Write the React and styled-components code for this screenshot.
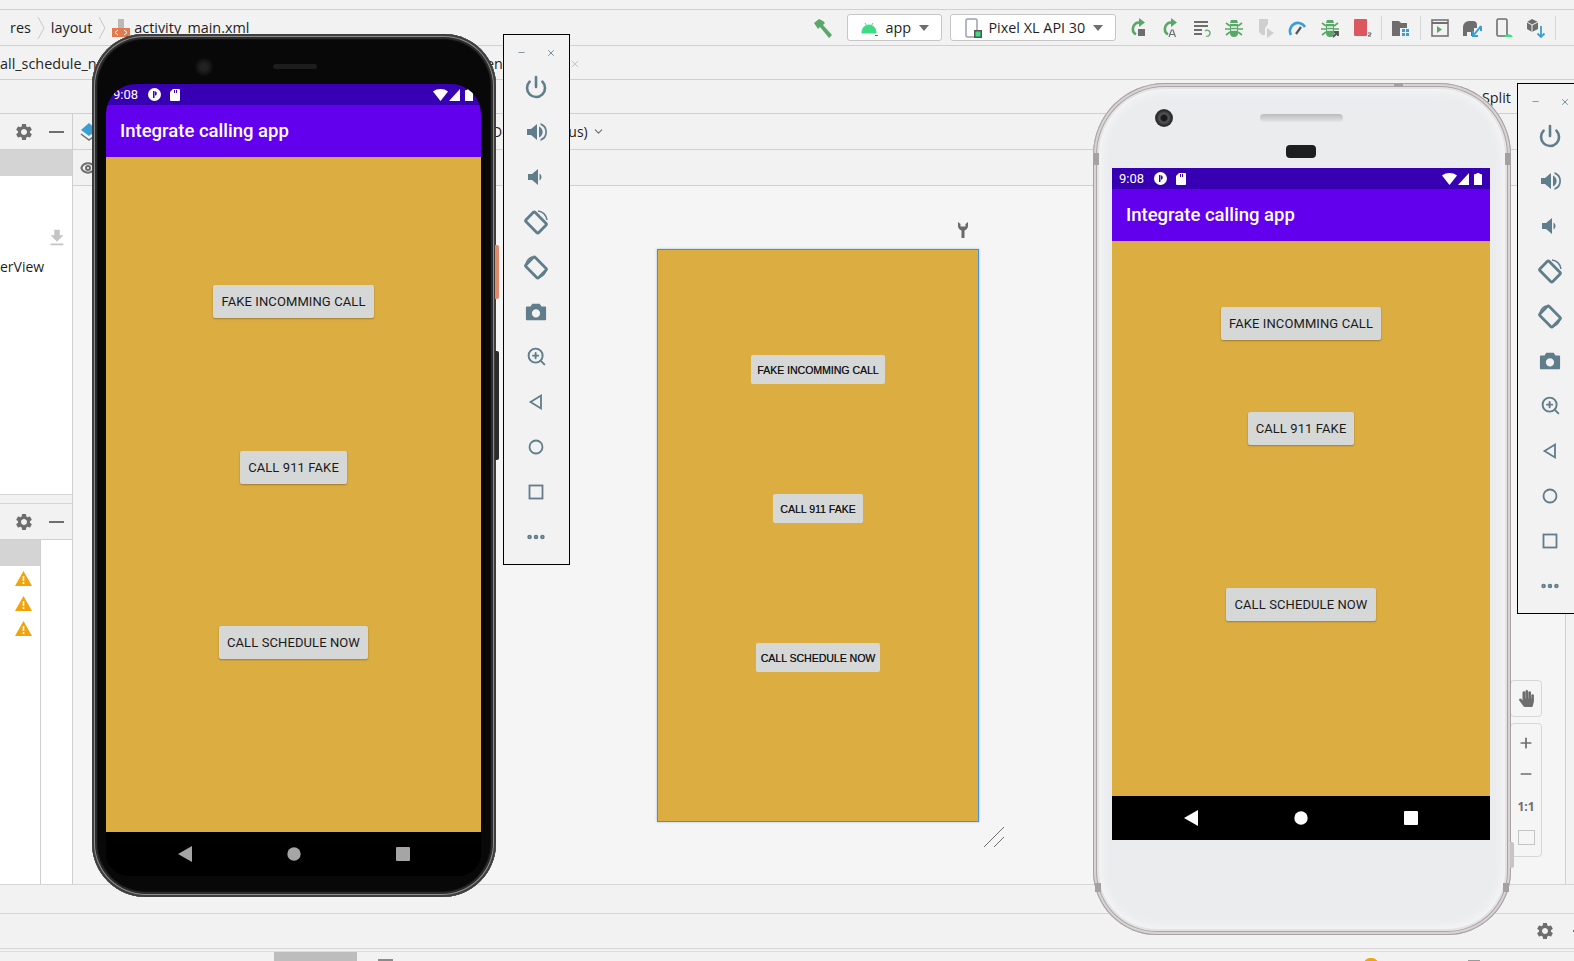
import React from "react"
import styled, { createGlobalStyle } from "styled-components"
import { Power, ZoomIn, Plus, Minus, X, ChevronDown, Eye, MoreHorizontal } from "lucide-react"
import { MdSettings, MdFileDownload } from "react-icons/md"
import { FaHandPaper } from "react-icons/fa"

const Global = createGlobalStyle`
    html, body { margin: 0; padding: 0; background: #f2f2f2; overflow: hidden; }
    * { box-sizing: border-box; }
`

const Page = styled.div`
    position: relative;
    width: 1574px;
    height: 961px;
    overflow: hidden;
    background: #f2f2f2;
    color: #1f1f1f;
    font-family: "Open Sans", "Noto Sans", sans-serif;
    font-size: 14.4px;
`
const TopStrip = styled.div`
    height: 10px;
    border-bottom: 1px solid #d0d0d0;
`
const Toolbar = styled.div`
    height: 36px;
    display: flex;
    align-items: center;
    white-space: nowrap;
    border-bottom: 1px solid #d0d0d0;
`
const Crumbs = styled.div`
    display: flex;
    align-items: center;
    padding-left: 10px;
`
const Crumb = styled.span`
    line-height: 20px;
    margin-left: ${p => p.$ml || 0}px;
`
const CrumbSep = styled.svg`
    width: 8px;
    height: 26px;
    margin: 0 6px;
    flex: none;
`
const Tools = styled.div`
    margin-left: 563px;
    display: flex;
    align-items: center;
`
const Hammer = styled.svg`
    width: 22px;
    height: 22px;
    margin-right: 13px;
    flex: none;
`
const Select = styled.div`
    height: 27px;
    width: ${p => p.$w}px;
    margin-right: ${p => p.$mr || 0}px;
    display: flex;
    align-items: center;
    padding-left: 12px;
    gap: 5px;
    background: #fff;
    border: 1px solid #c6c6c6;
    border-radius: 3px;
    flex: none;
`
const Caret = styled.i`
    margin-left: auto;
    margin-right: 12px;
    width: 0;
    height: 0;
    border-left: 5px solid transparent;
    border-right: 5px solid transparent;
    border-top: 6px solid #6e6e6e;
`
const ToolBtn = styled.div`
    width: 32px;
    height: 24px;
    display: flex;
    align-items: center;
    justify-content: center;
    flex: none;
`
const ToolSep = styled.div`
    width: 1px;
    height: 24px;
    background: #d6d6d6;
    flex: none;
    margin: 0 3px;
`
const TabRow = styled.div`
    height: 34px;
    display: flex;
    align-items: center;
    padding-top: 2px;
    white-space: nowrap;
    border-bottom: 1px solid #d0d0d0;
`
const TabName = styled.span`
    flex: none;
    width: ${p => (p.$w ? `${p.$w}px` : "auto")};
`
const TabClose = styled(X)`
    margin-left: 66px;
    color: #c4c4c4;
`
const ModeRow = styled.div`
    height: 34px;
    display: flex;
    align-items: center;
    justify-content: flex-end;
    padding: 1px 63px 0 0;
    border-bottom: 1px solid #d0d0d0;
`
const Body = styled.div`
    display: flex;
    height: 771px;
    border-bottom: 1px solid #d6d6d6;
`
const Sidebar = styled.aside`
    width: 73px;
    flex: none;
    display: flex;
    flex-direction: column;
    border-right: 1px solid #cfcfcf;
`
const PanelHead = styled.div`
    height: 36px;
    flex: none;
    display: flex;
    align-items: center;
    gap: 15px;
    padding-left: 14px;
    color: #6e6e6e;
    background: #f2f2f2;
    border-bottom: 1px solid #cfcfcf;
`
const DashIcon = styled.i`
    width: 15px;
    height: 2px;
    background: #6e6e6e;
`
const TrailingDash = styled(DashIcon)`
    margin-right: -14px;
`
const GreyRow = styled.div`
    height: 26px;
    flex: none;
    background: #d4d4d4;
`
const UpperList = styled.div`
    flex: none;
    height: 319px;
    background: #fff;
    border-bottom: 1px solid #d6d6d6;
    display: flex;
    flex-direction: column;
`
const ListDownload = styled.div`
    display: flex;
    justify-content: flex-end;
    padding: 51px 4px 0 0;
    color: #c4c4c4;
`
const ListText = styled.div`
    font-size: 14px;
    line-height: 20px;
    margin-top: 8px;
`
const PanelGap = styled.div`
    height: 9px;
    flex: none;
    border-bottom: 1px solid #d6d6d6;
`
const LowerPanel = styled.div`
    flex: 1;
    display: flex;
    background: #fff;
`
const IssueCol = styled.div`
    width: 41px;
    flex: none;
    border-right: 1px solid #cfcfcf;
`
const IssueRow = styled.div`
    height: 25px;
    display: flex;
    align-items: center;
    justify-content: center;
    padding-left: 6px;
`
const Editor = styled.div`
    flex: 1;
    display: flex;
    flex-direction: column;
    min-width: 0;
`
const EditorRow = styled.div`
    height: 36px;
    flex: none;
    display: flex;
    align-items: center;
    white-space: nowrap;
    padding-left: 7px;
    color: #6e6e6e;
    border-bottom: 1px solid #d0d0d0;
`
const LocaleText = styled.span`
    margin: 0 4px 0 394px;
    color: #1f1f1f;
    font-size: 14px;
`
const Canvas = styled.div`
    position: relative;
    flex: 1;
    padding: 63px 0 0 584px;
    background: #f5f5f5;
    border-right: 1px solid #d0d0d0;
    margin-right: 8px;
`
const Blueprint = styled.div`
    position: relative;
    width: 322px;
    height: 573px;
    display: flex;
    flex-direction: column;
    align-items: center;
    background: #dcae42;
    border: 1px solid #4a90d9;
    box-shadow: 0 0 2px rgba(74, 144, 217, 0.6);
`
const BlueprintButton = styled.div`
    height: 29px;
    width: ${p => p.$w}px;
    margin-top: ${p => p.$mt}px;
    display: flex;
    align-items: center;
    justify-content: center;
    background: #d6d7d7;
    border-radius: 2px;
    color: #111;
    font-family: "Liberation Sans", Arial, sans-serif;
    font-size: 10.5px;
    white-space: nowrap;
    text-shadow: 0.2px 0 0 #555;
`
const WrenchMark = styled.svg`
    position: absolute;
    right: 9px;
    top: -29px;
`
const ResizeMark = styled.svg`
    position: absolute;
    left: 324px;
    top: 575px;
`
const ZoomStack = styled.div`
    position: absolute;
    left: 1437px;
    top: 494px;
    width: 32px;
    display: flex;
    flex-direction: column;
    gap: 6px;
`
const ZoomBox = styled.div`
    height: ${p => p.$h}px;
    display: flex;
    flex-direction: column;
    align-items: center;
    justify-content: space-around;
    padding: 3px 0;
    color: #6e6e6e;
    background: #f5f5f5;
    border: 1px solid #d6d6d6;
    border-radius: 4px;
`
const OneToOne = styled.span`
    font-size: 12px;
    font-weight: 700;
    color: #6e6e6e;
`
const FitIcon = styled.i`
    width: 17px;
    height: 15px;
    border: 1px solid #c4c4c4;
`
const StatusRow = styled.div`
    height: ${p => p.$h}px;
    display: flex;
    align-items: center;
    justify-content: flex-end;
    gap: 18px;
    color: #6e6e6e;
    border-bottom: 1px solid #d6d6d6;
`
const BottomRow = styled.div`
    position: relative;
    height: 12px;
    margin-top: 2px;
    border-top: 1px solid #dcdcdc;
    display: flex;
    overflow: hidden;
`
const BottomTab = styled.div`
    margin-left: 274px;
    width: 83px;
    height: 11px;
    background: #bdbdbd;
`
const BottomMark = styled.i`
    margin: ${p => p.$top}px 0 0 ${p => p.$ml}px;
    width: ${p => p.$w}px;
    height: 12px;
    flex: none;
    background: ${p => p.$bg};
    border-radius: ${p => p.$round || 0}px;
`

// emulators
const PhoneShell = styled.div`
    position: absolute;
    left: ${p => p.$x}px;
    top: ${p => p.$y}px;
    width: ${p => p.$w}px;
    height: ${p => p.$h}px;
`
const BlackBody = styled.div`
    width: 100%;
    height: 100%;
    padding: 50px 15px 0 14px;
    background: #080808;
    border-radius: 52px 52px 54px 54px;
    box-shadow: inset 0 0 0 2px #3e3e3e, inset 0 0 0 3px #8d8d8d, inset 0 0 0 5px #2c2c2c, inset 0 0 0 6px #111;
`
const SilverBody = styled.div`
    width: 100%;
    height: 100%;
    padding: 85px 21px 0 19px;
    background: #ebecee;
    border-radius: 72px 72px 64px 64px;
    box-shadow: inset 0 0 0 1px #a8a2a5, inset 0 0 0 3px #d8d4d6, inset 0 0 0 4px #aaa5a7, inset 0 0 0 6px #e4e2e3, inset 0 0 10px 8px #f7f7f8;
`
const SideKey = styled.i`
    position: absolute;
    right: -3px;
    top: ${p => p.$top}px;
    width: 4px;
    height: ${p => p.$h}px;
    background: ${p => p.$bg};
    border-radius: 0 2px 2px 0;
`
const Band = styled.i`
    position: absolute;
    top: ${p => p.$top}px;
    left: ${p => p.$left}px;
    width: ${p => p.$w}px;
    height: ${p => p.$h}px;
    background: #a5a0a2;
`
const Lens = styled.i`
    position: absolute;
    left: 62px;
    top: 26px;
    width: 18px;
    height: 18px;
    border-radius: 50%;
    background: radial-gradient(circle, #1a1a1a 20%, #555 35%, #2a2a2a 60%, #5a5a5a 100%);
`
const Earpiece = styled.i`
    position: absolute;
    left: ${p => p.$left}px;
    top: ${p => p.$top}px;
    width: ${p => p.$w}px;
    height: ${p => p.$h}px;
    border-radius: 4px;
    background: ${p => p.$bg};
`
const FrontCam = styled.i`
    position: absolute;
    left: 103px;
    top: 24px;
    width: 18px;
    height: 18px;
    border-radius: 50%;
    background: radial-gradient(circle, #222 25%, #111 60%, #050505 100%);
`
const Screen = styled.div`
    height: ${p => p.$h}px;
    display: flex;
    flex-direction: column;
    overflow: hidden;
    border-radius: ${p => p.$r || 0}px ${p => p.$r || 0}px ${p => (p.$r ? 22 : 0)}px ${p => (p.$r ? 22 : 0)}px;
`
const StatusBar = styled.div`
    height: 21px;
    flex: none;
    display: flex;
    align-items: center;
    padding: 0 8px 0 7px;
    background: #3700b3;
    color: #fff;
    font-family: Roboto, sans-serif;
    font-size: 13px;
`
const Clock = styled.span`
    width: 35px;
`
const StatusGap = styled.div`
    flex: 1;
`
const StatusGlyph = styled.svg`
    display: block;
    flex: none;
    margin-right: ${p => p.$mr || 0}px;
`
const AppBar = styled.div`
    height: 52px;
    flex: none;
    display: flex;
    align-items: center;
    padding-left: 14px;
    background: #6200ee;
    color: #fff;
    font-family: Roboto, sans-serif;
    font-weight: 500;
    font-size: 18.5px;
    box-shadow: 0 1px 2px rgba(0, 0, 0, 0.25);
`
const Content = styled.div`
    flex: 1;
    display: flex;
    flex-direction: column;
    align-items: center;
    background: #dcae42;
`
const AppButton = styled.div`
    height: 33px;
    margin-top: ${p => p.$mt}px;
    padding: 0 8px;
    display: flex;
    align-items: center;
    background: #d6d7d7;
    border-radius: 2px;
    color: #1a1a1a;
    font-family: Roboto, sans-serif;
    font-size: 13px;
    font-weight: 400;
    letter-spacing: 0.1px;
    white-space: nowrap;
    box-shadow: 0 1px 2px rgba(0, 0, 0, 0.28);
`
const NavBar = styled.div`
    height: 44px;
    flex: none;
    display: flex;
    align-items: center;
    justify-content: center;
    gap: ${p => p.$gap}px;
    background: #000;
    color: ${p => p.$color};
`

// emulator side toolbar
const EmuBar = styled.div`
    position: absolute;
    left: ${p => p.$x}px;
    top: ${p => p.$y}px;
    width: 67px;
    height: 531px;
    padding-right: 1px;
    display: flex;
    flex-direction: column;
    align-items: center;
    background: #f2f2f2;
    border: 1px solid #000;
    color: #607d8b;
`
const EmuTitle = styled.div`
    height: 29px;
    flex: none;
    display: flex;
    align-items: center;
    gap: 20px;
    padding-top: 6px;
`
const EmuBtn = styled.div`
    height: 45px;
    flex: none;
    display: flex;
    align-items: center;
    justify-content: center;
`

const Speaker = ({ full }) => (
    <svg width="24" height="24" viewBox="0 0 24 24" fill="currentColor">
        <path d="M3 9h4l6-5v16l-6-5H3z" transform={full ? "" : "translate(1 0)"} />
        {full ? <path d="M15 6.500a6 6 0 0 1 0 11zM16.500 3a9.500 9.500 0 0 1 0 18v-2a7.500 7.500 0 0 0 0-14z" /> : <path d="M15.500 8.500a4 4 0 0 1 0 7z" />}
    </svg>
)
const RotatePhone = ({ flip }) => (
    <svg width="26" height="26" viewBox="0 0 26 26" fill="none" stroke="currentColor">
        <rect x="6.500" y="4.500" width="13" height="18" rx="1.500" strokeWidth="2.800" transform="rotate(-45 13 13.500)" />
        <path d={flip ? "M3 10a10 10 0 0 1 6-7M23 16a10 10 0 0 1-6 7" : "M15 2a10 10 0 0 1 9 9"} strokeWidth="1.500" />
    </svg>
)
const EmuCamera = () => (
    <svg width="22" height="22" viewBox="0 0 24 24" fill="currentColor">
        <path fillRule="evenodd" d="M8 3h8l2 3h4a1 1 0 0 1 1 1v13a1 1 0 0 1-1 1H2a1 1 0 0 1-1-1V7a1 1 0 0 1 1-1h4zM12 9a4.500 4.500 0 1 0 0 9 4.500 4.500 0 0 0 0-9z" />
    </svg>
)
const Outline = ({ d }) => (
    <svg width="20" height="20" viewBox="0 0 20 20" fill="none" stroke="currentColor" strokeWidth="1.800">{d}</svg>
)

const emuItems = [
    <Power key="p" size={24} strokeWidth={2.6} />,
    <Speaker key="v" full />,
    <Speaker key="d" />,
    <RotatePhone key="r" />,
    <RotatePhone key="f" flip />,
    <EmuCamera key="c" />,
    <ZoomIn key="z" size={21} strokeWidth={2.2} />,
    <Outline key="b" d={<path d="M15 3.500v13L4.500 10z" />} />,
    <Outline key="h" d={<circle cx="10" cy="10" r="6.500" />} />,
    <Outline key="s" d={<rect x="3.500" y="3.500" width="13" height="13" />} />,
    <MoreHorizontal key="m" size={22} strokeWidth={3} />,
]

const EmuToolbar = ({ x, y }) => (
    <EmuBar $x={x} $y={y}>
        <EmuTitle>
            <Minus size={9} strokeWidth={2} />
            <X size={10} strokeWidth={2} />
        </EmuTitle>
        {emuItems.map(item => <EmuBtn key={item.key}>{item}</EmuBtn>)}
    </EmuBar>
)

const StatusLeft = ({ time }) => (
    <>
        <Clock>{time}</Clock>
        <StatusGlyph width="13" height="13" viewBox="0 0 13 13" $mr={9}>
            <circle cx="6.500" cy="6.500" r="6.500" fill="#fff" />
            <path d="M5 3h1.500v7H5zM7 3.200a2.300 2.300 0 0 1 0 4.500z" fill="#3700b3" />
        </StatusGlyph>
        <StatusGlyph width="10" height="12" viewBox="0 0 10 12">
            <path d="M3 0h6a1 1 0 0 1 1 1v10a1 1 0 0 1-1 1H1a1 1 0 0 1-1-1V3z" fill="#fff" />
            <path d="M4 1h1v3H4zM6 1h1v3H6z" fill="#3700b3" />
        </StatusGlyph>
        <StatusGap />
        <StatusGlyph width="15" height="12" viewBox="0 0 15 12" $mr={1}>
            <path d="M0 2.500C4-.8 11-.8 15 2.500L7.500 12z" fill="#fff" />
        </StatusGlyph>
        <StatusGlyph width="11" height="12" viewBox="0 0 11 12" $mr={5}>
            <path d="M11 0v12H0z" fill="#fff" />
        </StatusGlyph>
        <StatusGlyph width="8" height="12" viewBox="0 0 8 12">
            <path d="M2.500 0h3v1H7a1 1 0 0 1 1 1v10H0V2a1 1 0 0 1 1-1h1.500z" fill="#fff" />
        </StatusGlyph>
    </>
)

const NavIcons = ({ gap, color }) => (
    <NavBar $gap={gap} $color={color}>
        <svg width="14" height="16" viewBox="0 0 14 16"><path d="M14 0v16L0 8z" fill="currentColor" /></svg>
        <svg width="14" height="14" viewBox="0 0 14 14"><circle cx="7" cy="7" r="6.700" fill="currentColor" /></svg>
        <svg width="14" height="14" viewBox="0 0 14 14"><rect width="14" height="14" rx="1" fill="currentColor" /></svg>
    </NavBar>
)

const Android = () => (
    <svg width="20" height="20" viewBox="0 0 20 20">
        <path d="M2 14a7 7 0 0 1 14 0v1H2zM5 5l1.500 2.500M13 5l-1.500 2.500" fill="#3ddc84" stroke="#3ddc84" />
        <path d="M15 17h3v1h-3z" fill="#666" />
    </svg>
)
const DeviceIcon = () => (
    <svg width="20" height="22" viewBox="0 0 20 22">
        <rect x="3" y="2" width="11" height="18" rx="1.500" fill="none" stroke="#9aa0b4" strokeWidth="1.500" />
        <rect x="11" y="13" width="8" height="8" fill="#555" />
        <rect x="12.500" y="14.500" width="5" height="5" fill="#3ddc84" />
    </svg>
)
const ReRun = ({ letter }) => (
    <svg width="20" height="22" viewBox="0 0 20 22">
        <path d="M12 5.500a6.500 6.500 0 0 0-4 12" fill="none" stroke="#59a869" strokeWidth="2.600" />
        <path d="M11 1l6 4.500-6 4.500z" fill="#59a869" />
        {letter
            ? <path d="M9 20l2.500-7h1.500l2.500 7M10.200 17.500h4" fill="none" stroke="#6e6e6e" strokeWidth="1.200" />
            : <rect x="10" y="12" width="7" height="7" fill="#6e6e6e" />}
    </svg>
)
const ApplyLines = () => (
    <svg width="20" height="20" viewBox="0 0 20 20" stroke="#6e6e6e" strokeWidth="2" fill="none">
        <path d="M2 4h14M2 8h14M2 12h8M2 16h8" />
        <path d="M13 13a3 3 0 1 1 1 5" stroke="#59a869" strokeWidth="1.200" />
    </svg>
)
const Bug = ({ arrow }) => (
    <svg width="20" height="20" viewBox="0 0 20 20" fill="#59a869">
        <path d="M6 6h8v9a4 4 0 0 1-8 0zM7 2h6l1 3H6z" />
        <path d="M2 5l4 3M18 5l-4 3M1 11h5M19 11h-5M2 17l4-3M18 17l-4-3" stroke="#59a869" strokeWidth="1.600" />
        <path d="M7 9h6M7 12h6" stroke="#f2f2f2" strokeWidth="1.300" />
        {arrow && <path d="M13 19l5-5M14 14h4v4" stroke="#555" strokeWidth="1.800" fill="none" />}
    </svg>
)
const Coverage = () => (
    <svg width="20" height="22" viewBox="0 0 20 22" fill="#cfcfcf">
        <path d="M3 2h9v5l-3 4v7H6l-3-3z" />
        <path d="M11 11l7 5-7 5z" />
    </svg>
)
const Gauge = () => (
    <svg width="20" height="18" viewBox="0 0 20 18" fill="none">
        <path d="M3 16A8 8 0 0 1 17 8" stroke="#389fd6" strokeWidth="2.600" />
        <path d="M8 15l5-7" stroke="#555" strokeWidth="2.200" />
    </svg>
)
const StopBox = () => (
    <svg width="20" height="20" viewBox="0 0 20 20">
        <rect x="2" y="1" width="13" height="17" rx="1" fill="#db5860" />
        <path d="M16 15h3v1l-3 2h3" stroke="#666" fill="none" />
    </svg>
)
const ProjectIcon = () => (
    <svg width="20" height="18" viewBox="0 0 20 18">
        <path d="M1 2h7l2 2h6v5H9v8H1z" fill="#6e6e6e" />
        <rect x="11" y="10" width="3" height="3" fill="#389fd6" />
        <rect x="15" y="10" width="3" height="3" fill="#389fd6" />
        <rect x="11" y="14" width="3" height="3" fill="#389fd6" />
        <rect x="15" y="14" width="3" height="3" fill="#389fd6" />
    </svg>
)
const AvdWindow = () => (
    <svg width="20" height="20" viewBox="0 0 20 20" fill="none">
        <rect x="2" y="2" width="16" height="16" stroke="#6e6e6e" strokeWidth="1.500" />
        <path d="M2 5h16" stroke="#6e6e6e" strokeWidth="2" />
        <path d="M7 8l5 3.500L7 15z" fill="#59a869" />
    </svg>
)
const Elephant = () => (
    <svg width="22" height="20" viewBox="0 0 22 20">
        <path d="M2 18V9a6 6 0 0 1 6-6h4a4 4 0 0 1 4 4v3h-3v8h-3v-4H6v4z" fill="#6e6e6e" />
        <path d="M20 3v5M20 3l-8 10m0-5v5h5" stroke="#389fd6" strokeWidth="2" fill="none" transform="translate(0 5)" />
    </svg>
)
const DeviceAndroid = () => (
    <svg width="20" height="22" viewBox="0 0 20 22">
        <rect x="3" y="2" width="10" height="17" rx="1.500" fill="none" stroke="#6e6e6e" strokeWidth="1.600" />
        <path d="M10 20a5 5 0 0 1 9 0z" fill="#3ddc84" />
    </svg>
)
const SdkBox = () => (
    <svg width="20" height="22" viewBox="0 0 20 22">
        <path d="M6 2l6 3v7l-6 3-5-3V5z" fill="#6e6e6e" />
        <path d="M1 5l5 3 6-3M6 8v7" stroke="#f2f2f2" fill="none" />
        <path d="M15 9v11M11.500 16.500L15 20l3.500-3.500" stroke="#389fd6" strokeWidth="1.800" fill="none" />
    </svg>
)
const Warn = () => (
    <svg width="17" height="15" viewBox="0 0 17 15">
        <path d="M8.500 0L17 15H0z" fill="#f0a30a" />
        <path d="M7.700 5h1.600v5H7.700zM7.700 11h1.600v2H7.700z" fill="#fff" />
    </svg>
)
const Sep = () => (
    <CrumbSep viewBox="0 0 8 26"><path d="M1 2l6 11-6 11" fill="none" stroke="#c8c8c8" /></CrumbSep>
)

function LeftPhone() {
    return (
        <PhoneShell $x={92} $y={34} $w={404} $h={863}>
            <SideKey $top={211} $h={54} $bg="#e0886a" />
            <SideKey $top={317} $h={109} $bg="#2c2c2c" />
            <BlackBody>
                <FrontCam />
                <Earpiece $left={181} $top={30} $w={44} $h={5} $bg="#1d1d1d" />
                <Screen $h={792} $r={30}>
                    <StatusBar><StatusLeft time="9:08" /></StatusBar>
                    <AppBar>Integrate calling app</AppBar>
                    <Content>
                        <AppButton $mt={128}>FAKE INCOMMING CALL</AppButton>
                        <AppButton $mt={133}>CALL 911 FAKE</AppButton>
                        <AppButton $mt={142}>CALL SCHEDULE NOW</AppButton>
                    </Content>
                    <NavIcons gap={95} color="#a5a5a5" />
                </Screen>
            </BlackBody>
        </PhoneShell>
    )
}

function RightPhone() {
    return (
        <PhoneShell $x={1093} $y={83} $w={418} $h={852}>
            <SideKey $top={759} $h={26} $bg="#c8c4c6" />
            <Band $top={70} $left={1} $w={5} $h={12} />
            <Band $top={70} $left={412} $w={5} $h={12} />
            <Band $top={0} $left={301} $w={9} $h={4} />
            <Band $top={800} $left={2} $w={6} $h={9} />
            <Band $top={800} $left={410} $w={6} $h={9} />
            <SilverBody>
                <Lens />
                <Earpiece $left={167} $top={31} $w={83} $h={8} $bg="linear-gradient(#b9bbbd, #e4e5e6)" />
                <Earpiece $left={193} $top={62} $w={30} $h={13} $bg="#1d1e20" />
                <Screen $h={672}>
                    <StatusBar><StatusLeft time="9:08" /></StatusBar>
                    <AppBar>Integrate calling app</AppBar>
                    <Content>
                        <AppButton $mt={66}>FAKE INCOMMING CALL</AppButton>
                        <AppButton $mt={72}>CALL 911 FAKE</AppButton>
                        <AppButton $mt={143}>CALL SCHEDULE NOW</AppButton>
                    </Content>
                    <NavIcons gap={96} color="#fff" />
                </Screen>
            </SilverBody>
        </PhoneShell>
    )
}

export default function App() {
    return (
        <Page>
            <Global />
            <TopStrip />
            <Toolbar>
                <Crumbs>
                    <Crumb>res</Crumb>
                    <Sep />
                    <Crumb>layout</Crumb>
                    <Sep />
                    <svg width="18" height="20" viewBox="0 0 18 20">
                        <path d="M6 1h6v9H6z" fill="#b9b9b9" />
                        <rect y="10" width="18" height="9" fill="#e2794f" />
                        <path d="M6 12l-3 2.500L6 17M12 12l3 2.500L12 17" stroke="#fff" fill="none" />
                    </svg>
                    <Crumb $ml={4}>activity_main.xml</Crumb>
                </Crumbs>
                <Tools>
                    <Hammer viewBox="0 0 22 22">
                        <path d="M2 6l5-4 4 2 2 2-2 2 9 10-3 3-9-11-2 2z" fill="#59a869" />
                    </Hammer>
                    <Select $w={95} $mr={8}><Android /><span>app</span><Caret /></Select>
                    <Select $w={166} $mr={6}><DeviceIcon /><span>Pixel XL API 30</span><Caret /></Select>
                    <ToolBtn><ReRun /></ToolBtn>
                    <ToolBtn><ReRun letter /></ToolBtn>
                    <ToolBtn><ApplyLines /></ToolBtn>
                    <ToolBtn><Bug /></ToolBtn>
                    <ToolBtn><Coverage /></ToolBtn>
                    <ToolBtn><Gauge /></ToolBtn>
                    <ToolBtn><Bug arrow /></ToolBtn>
                    <ToolBtn><StopBox /></ToolBtn>
                    <ToolSep />
                    <ToolBtn><ProjectIcon /></ToolBtn>
                    <ToolSep />
                    <ToolBtn><AvdWindow /></ToolBtn>
                    <ToolBtn><Elephant /></ToolBtn>
                    <ToolBtn><DeviceAndroid /></ToolBtn>
                    <ToolBtn><SdkBox /></ToolBtn>
                    <ToolSep />
                </Tools>
            </Toolbar>
            <TabRow>
                <TabName $w={486}>all_schedule_now.xml</TabName>
                <TabName>en</TabName>
                <TabClose size={12} />
            </TabRow>
            <ModeRow>Split</ModeRow>
            <Body>
                <Sidebar>
                    <PanelHead><MdSettings size={20} /><DashIcon /></PanelHead>
                    <GreyRow />
                    <UpperList>
                        <ListDownload><MdFileDownload size={22} /></ListDownload>
                        <ListText>erView</ListText>
                    </UpperList>
                    <PanelGap />
                    <PanelHead><MdSettings size={20} /><DashIcon /></PanelHead>
                    <LowerPanel>
                        <IssueCol>
                            <GreyRow />
                            <IssueRow><Warn /></IssueRow>
                            <IssueRow><Warn /></IssueRow>
                            <IssueRow><Warn /></IssueRow>
                        </IssueCol>
                    </LowerPanel>
                </Sidebar>
                <Editor>
                    <EditorRow>
                        <svg width="18" height="20" viewBox="0 0 18 20">
                            <path d="M9 1l8 7-8 6-8-6z" fill="#389fd6" />
                            <path d="M1 12l8 6 8-6" fill="none" stroke="#6e6e6e" strokeWidth="1.500" />
                        </svg>
                        <LocaleText>Default (en-us)</LocaleText>
                        <ChevronDown size={13} />
                    </EditorRow>
                    <EditorRow><Eye size={16} strokeWidth={3} /></EditorRow>
                    <Canvas>
                        <Blueprint>
                            <WrenchMark width="12" height="18" viewBox="0 0 12 18">
                                <path d="M1 1v4a5 5 0 0 0 3.500 4.500V17h3V9.500A5 5 0 0 0 11 5V1L8.500 3v2.500h-5V3z" fill="#6a6a6a" />
                            </WrenchMark>
                            <BlueprintButton $w={134} $mt={105}>FAKE INCOMMING CALL</BlueprintButton>
                            <BlueprintButton $w={90} $mt={110}>CALL 911 FAKE</BlueprintButton>
                            <BlueprintButton $w={124} $mt={120}>CALL SCHEDULE NOW</BlueprintButton>
                            <ResizeMark width="24" height="24" viewBox="0 0 24 24" stroke="#6e6e6e" fill="none">
                                <path d="M2 22L22 2M12 22l10-10" />
                            </ResizeMark>
                        </Blueprint>
                        <ZoomStack>
                            <ZoomBox $h={37}><FaHandPaper size={17} /></ZoomBox>
                            <ZoomBox $h={134}>
                                <Plus size={16} strokeWidth={2.6} />
                                <Minus size={16} strokeWidth={2.6} />
                                <OneToOne>1:1</OneToOne>
                                <FitIcon />
                            </ZoomBox>
                        </ZoomStack>
                    </Canvas>
                </Editor>
            </Body>
            <StatusRow $h={29} />
            <StatusRow $h={35}>
                <MdSettings size={20} />
                <TrailingDash />
            </StatusRow>
            <BottomRow>
                <BottomTab />
                <BottomMark $top={7} $ml={21} $w={15} $bg="#8a8a8a" />
                <BottomMark $top={6} $ml={971} $w={14} $round={7} $bg="#f0a30a" />
                <BottomMark $top={8} $ml={90} $w={12} $bg="#9a9a9a" />
            </BottomRow>

            <LeftPhone />
            <EmuToolbar x={503} y={34} />
            <RightPhone />
            <EmuToolbar x={1517} y={83} />
        </Page>
    )
}
